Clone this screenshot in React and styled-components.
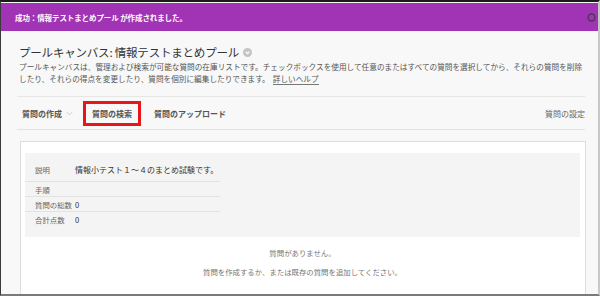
import React from 'react';
import styled, { createGlobalStyle } from 'styled-components';

const GlobalStyle = createGlobalStyle`
    html, body {
        margin: 0;
        padding: 0;
        background: #ffffff;
    }
    body {
        font-family: "Noto Sans CJK JP", "Noto Sans", sans-serif;
    }
`;

const Frame = styled.div`
    width: 600px;
    height: 296px;
    box-sizing: border-box;
    border-top: 2px solid #1a1a1a;
    border-left: 1px solid #3a3a3a;
    border-right: 2px solid #c8c8c8;
    border-bottom: 2px solid #7a7a7a;
    background: #f8f8f8;
    overflow: hidden;
    display: flex;
    flex-direction: column;
`;

const Banner = styled.div`
    margin-top: 1px;
    height: 28px;
    flex-shrink: 0;
    background: #a034b4;
    display: flex;
    align-items: center;
    justify-content: space-between;
    padding: 0 2px 0 14px;
    color: #ffffff;
    font-size: 7.5px;
    font-weight: 700;
    letter-spacing: -0.1px;
`;

const Header = styled.div`
    padding: 13px 11px 0 18px;
    height: 52px;
`;

const Title = styled.h1`
    margin: 0;
    display: flex;
    align-items: center;
    gap: 4px;
    font-size: 11.5px;
    font-weight: 400;
    color: #333333;
    line-height: 16px;
    letter-spacing: -0.2px;
`;

const Desc = styled.p`
    margin: 1px 0 0;
    font-size: 7.65px;
    line-height: 12px;
    color: #555555;
`;

const HelpLink = styled.span`
    display: inline-block;
    margin-left: 3px;
    line-height: 10px;
    border-bottom: 1px solid #777;
`;

const TabBar = styled.div`
    display: flex;
    align-items: center;
    height: 32px;
    margin: 0 13px 0 16px;
    padding-left: 5px;
    border-top: 1px solid #e6e6e6;
    border-bottom: 1px solid #e2e2e2;
`;

const Tab = styled.div`
    display: flex;
    align-items: center;
    gap: 4px;
    box-sizing: border-box;
    height: 25px;
    margin-right: 13px;
    font-size: 8px;
    font-weight: 700;
    color: #555555;
    white-space: nowrap;
`;

const BoxedTab = styled(Tab)`
    padding: 0 6px;
    border: 3px solid #e8151b;
`;

const DropTab = styled(Tab)`
    margin-right: 10px;
`;

const SettingsTab = styled(Tab)`
    margin-left: auto;
    margin-right: 0;
    font-weight: 400;
    color: #666666;
`;

const ContentBox = styled.div`
    margin: 11px 12px 0 19px;
    flex: 1;
    background: #ffffff;
    border: 1px solid #dddddd;
    border-bottom: none;
    padding: 11px 5px 0 4px;
`;

const InfoBox = styled.div`
    background: #f4f4f4;
    padding: 4px 0 11px 0;
`;

const InfoRow = styled.div`
    display: flex;
    align-items: center;
    width: 185px;
    height: ${({ tall }) => (tall ? '24px' : '14px')};
    border-bottom: ${({ last }) => (last ? 'none' : '1px solid #e2e2e2')};
    padding-left: 10px;
`;

const Label = styled.span`
    min-width: 40px;
    font-size: 7.4px;
    color: #666666;
    white-space: nowrap;
`;

const Value = styled.span`
    font-size: ${({ big }) => (big ? '8px' : '7.6px')};
    color: #333333;
    white-space: nowrap;
`;

const Empty = styled.div`
    text-align: center;
    padding-top: 6px;
    font-size: 7.4px;
    color: #777777;
    line-height: 19px;
`;

const HintIcon = () => (
    <svg width="9" height="9" viewBox="0 0 10 10">
        <circle cx="5" cy="5" r="5" fill="#c4c4c4" />
        <path d="M3 4.2 L5 6.2 L7 4.2" stroke="#ffffff" strokeWidth="1.3" fill="none" />
    </svg>
);

const CloseIcon = () => (
    <svg width="9" height="9" viewBox="0 0 10 10">
        <circle cx="5" cy="5" r="3.8" stroke="#4a3a55" strokeWidth="1.6" fill="none" />
    </svg>
);

const Chevron = () => (
    <svg width="7" height="5" viewBox="0 0 8 5">
        <path d="M1 1 L4 4 L7 1" stroke="#c6c6c6" strokeWidth="1" fill="none" />
    </svg>
);

const infoRows = [
    { label: '説明', value: '情報小テスト１～４のまとめ試験です。', tall: true, big: true },
    { label: '手順', value: '' },
    { label: '質問の総数', value: '0' },
    { label: '合計点数', value: '0', last: true },
];

const App = () => {
    return (
        <>
            <GlobalStyle />
            <Frame>
                <Banner>
                    <span>成功：情報テストまとめプール が作成されました。</span>
                    <CloseIcon />
                </Banner>
                <Header>
                    <Title>
                        プールキャンバス: 情報テストまとめプール
                        <HintIcon />
                    </Title>
                    <Desc>
                        プールキャンバスは、管理および検索が可能な質問の在庫リストです。チェックボックスを使用して任意のまたはすべての質問を選択してから、それらの質問を削除したり、それらの得点を変更したり、質問を個別に編集したりできます。
                        <HelpLink>詳しいヘルプ</HelpLink>
                    </Desc>
                </Header>
                <TabBar>
                    <DropTab>質問の作成 <Chevron /></DropTab>
                    <BoxedTab>質問の検索</BoxedTab>
                    <Tab>質問のアップロード</Tab>
                    <SettingsTab>質問の設定</SettingsTab>
                </TabBar>
                <ContentBox>
                    <InfoBox>
                        {infoRows.map((row, index) => (
                            <InfoRow key={index} tall={row.tall} last={row.last}>
                                <Label>{row.label}</Label>
                                <Value big={row.big}>{row.value}</Value>
                            </InfoRow>
                        ))}
                    </InfoBox>
                    <Empty>
                        <div>質問がありません。</div>
                        <div>質問を作成するか、または既存の質問を追加してください。</div>
                    </Empty>
                </ContentBox>
            </Frame>
        </>
    );
};

export default App;
